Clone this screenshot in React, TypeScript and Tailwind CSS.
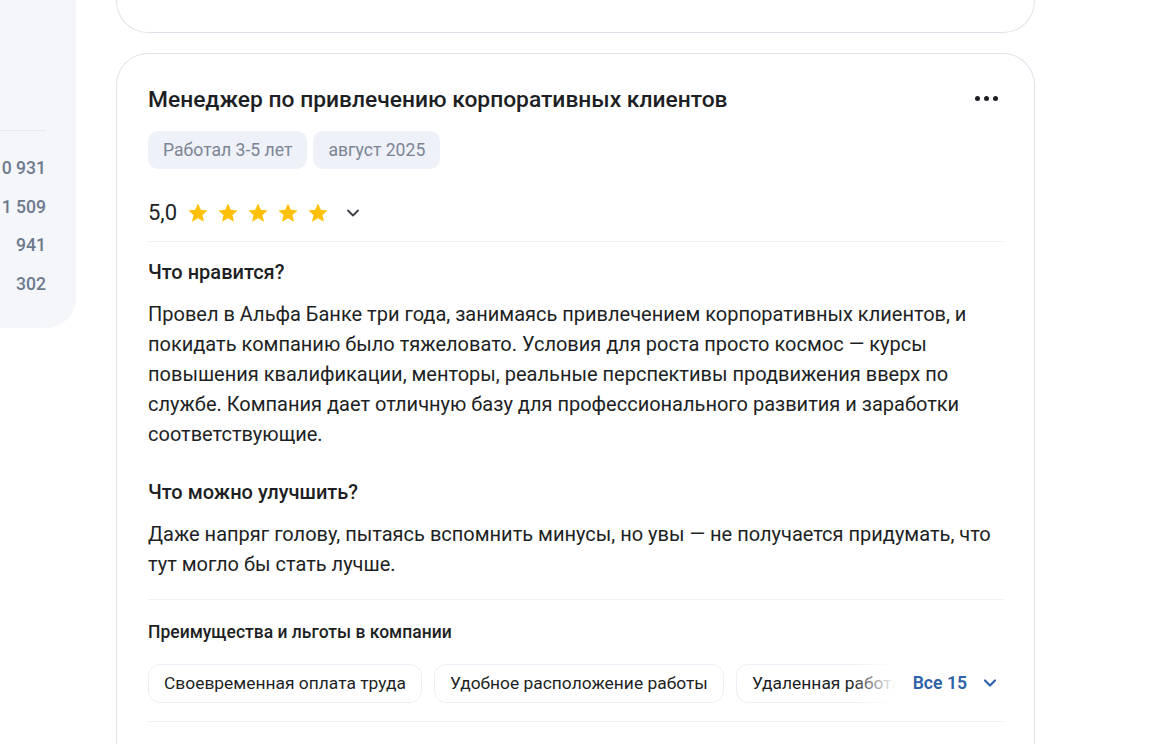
import { ChevronDown } from "lucide-react";

const stats = ["0 931", "1 509", "941", "302"];
const perks = ["Своевременная оплата труда", "Удобное расположение работы", "Удаленная работа"];

const Star = () => (
    <svg width="22" height="22" viewBox="0 0 24 24" className="shrink-0">
        <path d="M12 1.5l3.09 6.96 7.41.73-5.6 5.01 1.63 7.3L12 17.7l-6.53 3.8 1.63-7.3-5.6-5.01 7.41-.73z" fill="#ffc107" />
    </svg>
);

export default function App() {
    return (
        <div className="w-[1162px] h-[744px] overflow-hidden bg-white flex items-start gap-10 text-[#1d1f24]" style={{ fontFamily: "Roboto, 'Noto Sans', sans-serif" }}>

            {/* left stats panel (cut off by the viewport) */}
            <aside className="w-[76px] shrink-0 h-[328px] bg-[#f4f6fa] rounded-br-[30px] pt-[130px] pr-[30px]">
                <div className="border-t border-[#e6e9f0]" />
                <ul className="flex flex-col items-end gap-[14.5px] pt-[25px] text-[17.6px] font-medium text-[#6d7a8e]">
                    {stats.map((s) => (
                        <li key={s} className="leading-6 whitespace-nowrap">{s}</li>
                    ))}
                </ul>
            </aside>

            <main className="w-[919px] shrink-0 flex flex-col gap-5">
                {/* previous card tail */}
                <div className="h-[33px] border border-t-0 border-[#dfe3ea] rounded-b-[32px]" />

                {/* review card */}
                <article className="border border-b-0 border-[#dfe3ea] rounded-t-[32px] px-[31px] pt-8 h-[720px]">
                    <header className="flex items-center justify-between">
                        <h2 className="text-[22.8px] leading-7 font-medium">Менеджер по привлечению корпоративных клиентов</h2>
                        <button className="flex gap-[4px] mr-[5px] -mt-[4px]">
                            <span className="w-[5px] h-[5px] rounded-full bg-[#1d1f24]" />
                            <span className="w-[5px] h-[5px] rounded-full bg-[#1d1f24]" />
                            <span className="w-[5px] h-[5px] rounded-full bg-[#1d1f24]" />
                        </button>
                    </header>

                    <div className="flex gap-[6px] mt-[17px]">
                        <span className="h-[38px] px-[15px] flex items-center rounded-[10px] bg-[#eef1f7] text-[17.6px] text-[#7b8596]">Работал 3-5 лет</span>
                        <span className="h-[38px] px-[15px] flex items-center rounded-[10px] bg-[#eef1f7] text-[17.6px] text-[#7b8596]">август 2025</span>
                    </div>

                    <div className="flex items-center mt-[28px] h-8">
                        <span className="text-[22px] leading-8 mr-[10px]">5,0</span>
                        <div className="flex gap-2">
                            <Star /><Star /><Star /><Star /><Star />
                        </div>
                        <ChevronDown size={20} strokeWidth={2.2} className="ml-[14px] text-[#3c3f45]" />
                    </div>

                    <div className="border-t border-[#eef0f5] mt-[12px]" />

                    <h3 className="text-[20px] leading-6 font-medium mt-[18px]">Что нравится?</h3>
                    <p className="text-[20px] leading-[30px] mt-[15px]">
                        Провел в Альфа Банке три года, занимаясь привлечением корпоративных клиентов, и покидать компанию было тяжеловато. Условия для роста просто космос — курсы повышения квалификации, менторы, реальные перспективы продвижения вверх по службе. Компания дает отличную базу для профессионального развития и заработки соответствующие.
                    </p>

                    <h3 className="text-[20px] leading-6 font-medium mt-[31px]">Что можно улучшить?</h3>
                    <p className="text-[20px] leading-[30px] mt-[15px]">
                        Даже напряг голову, пытаясь вспомнить минусы, но увы — не получается придумать, что тут могло бы стать лучше.
                    </p>

                    <div className="border-t border-[#eef0f5] mt-[20px]" />

                    <h4 className="text-[17.5px] leading-5 font-medium mt-[22px]">Преимущества и льготы в компании</h4>

                    <div className="flex items-center mt-[22px]">
                        <div className="relative flex-1 min-w-0 overflow-hidden">
                            <div className="flex gap-[12px]">
                                {perks.map((p) => (
                                    <span key={p} className="shrink-0 h-[39px] px-[15px] flex items-center rounded-[12px] border border-[#eceff5] text-[17.4px] whitespace-nowrap">{p}</span>
                                ))}
                            </div>
                            <div className="absolute inset-y-0 right-0 w-[44px] bg-gradient-to-r from-white/0 to-white" />
                        </div>
                        <button className="shrink-0 flex items-center gap-[13px] ml-[18px] mr-[3px] whitespace-nowrap text-[17.6px] font-semibold text-[#2f62a8]">
                            Все 15
                            <ChevronDown size={20} strokeWidth={2.6} />
                        </button>
                    </div>

                    <div className="border-t border-[#eef0f5] mt-[18px]" />
                </article>
            </main>
        </div>
    );
}
